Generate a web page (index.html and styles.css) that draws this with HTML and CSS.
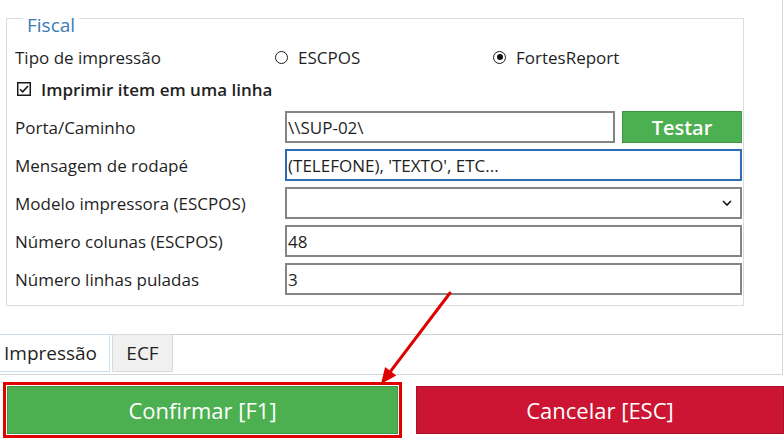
FILE: index.html
```html
<!DOCTYPE html>
<html lang="pt-BR">
<head>
  <meta charset="UTF-8" />
  <meta name="viewport" content="width=device-width, initial-scale=1.0"/>
  <title>Configuração de impressão</title>
  <link rel="stylesheet" href="styles.css">
</head>
<body>
  <div class="janela">
    <!-- Controle de abas (abas embaixo) -->
    <div class="abas">
      <div class="aba-conteudo">
        <fieldset class="grupo">
          <legend>Fiscal</legend>

          <div class="linha-tipo">
            <span class="rotulo">Tipo de impressão</span>
            <label class="opcao"><span class="radio"></span>ESCPOS</label>
            <label class="opcao"><span class="radio marcado"></span>FortesReport</label>
          </div>

          <label class="check">
            <svg class="check-caixa" width="14" height="14" viewBox="0 0 14 14">
              <rect x="0.75" y="0.75" width="12.5" height="12.5" fill="#fff" stroke="#1a1a1a" stroke-width="1.5"/>
              <path d="M3 7.2 L5.7 9.9 L11 4" fill="none" stroke="#1a1a1a" stroke-width="1.6"/>
            </svg>
            Imprimir item em uma linha
          </label>

          <div class="campos">
            <div class="campo">
              <span class="rotulo">Porta/Caminho</span>
              <div class="com-botao">
                <input class="entrada" type="text" value="\\SUP-02\">
                <button class="btn-testar">Testar</button>
              </div>
            </div>
            <div class="campo">
              <span class="rotulo">Mensagem de rodapé</span>
              <input class="entrada foco" type="text" value="(TELEFONE), 'TEXTO', ETC...">
            </div>
            <div class="campo">
              <span class="rotulo">Modelo impressora (ESCPOS)</span>
              <div class="entrada combo">
                <span></span>
                <svg width="10" height="6" viewBox="0 0 10 6">
                  <path d="M1 1 L5 5 L9 1" fill="none" stroke="#111" stroke-width="1.6"/>
                </svg>
              </div>
            </div>
            <div class="campo">
              <span class="rotulo">Número colunas (ESCPOS)</span>
              <input class="entrada" type="text" value="48">
            </div>
            <div class="campo">
              <span class="rotulo">Número linhas puladas</span>
              <input class="entrada" type="text" value="3">
            </div>
          </div>
        </fieldset>
      </div>

      <div class="abas-barra">
        <div class="aba ativa">Impressão</div>
        <div class="aba">ECF</div>
      </div>
    </div>

    <div class="acoes">
      <button class="btn btn-confirmar destaque">Confirmar [F1]</button>
      <button class="btn btn-cancelar">Cancelar [ESC]</button>
    </div>

    <!-- Seta de anotação apontando para o botão Confirmar -->
    <svg class="seta" width="784" height="438" viewBox="0 0 784 438">
      <line x1="450" y1="293" x2="390.7" y2="371.2" stroke="#e00000" stroke-width="3" stroke-linecap="round"/>
      <polygon points="381,384 396.3,375.4 385.1,367" fill="#e00000"/>
    </svg>
  </div>
</body>
</html>
```

FILE: styles.css
```css
/* Cores do formulário */
:root {
  --texto: #1f1f1f;
  --borda-campo: #858585;
  --borda-clara: #d6d6d6;
  --azul: #2d6db5;
  --verde: #4caf50;
  --verde-borda: #3e9742;
  --vermelho: #cc1533;
  --vermelho-borda: #a90f29;
  --fonte: 'Open Sans', 'Noto Sans', sans-serif;
}

* {
  box-sizing: border-box;
}

body {
  margin: 0;
  background: #fff;
  font-family: var(--fonte);
  color: var(--texto);
}

.janela {
  position: relative;
  width: 784px;
  height: 438px;
  overflow: hidden;
}

/* Controle de abas */
.abas {
  width: 783px;
  border-right: 1px solid var(--borda-clara);
  border-bottom: 1px solid var(--borda-clara);
}

.aba-conteudo {
  height: 335px;
  border-bottom: 1px solid #cfcfcf;
  padding-top: 8px;
}

.grupo {
  margin: 0 0 0 6px;
  width: 738px;
  padding: 16px 1px 10px 8px;
  border: 1px solid #dcdcdc;
  min-width: 0;
}

.grupo legend {
  position: relative;
  top: 7px;
  margin-left: 8px;
  padding: 0 4px;
  font-size: 19px;
  line-height: 20px;
  color: #3b7bb6;
}

.rotulo {
  font-size: 17px;
}

.linha-tipo {
  display: grid;
  grid-template-columns: 260px 218px 1fr;
  align-items: center;
  height: 26px;
}

.opcao {
  display: flex;
  align-items: center;
  gap: 10px;
  font-size: 17px;
}

.radio {
  flex: none;
  width: 13px;
  height: 13px;
  border: 1.5px solid #1a1a1a;
  border-radius: 50%;
  display: flex;
  align-items: center;
  justify-content: center;
}

.radio.marcado::after {
  content: "";
  width: 6px;
  height: 6px;
  border-radius: 50%;
  background: #111;
}

.check {
  display: flex;
  align-items: center;
  gap: 10px;
  height: 26px;
  margin-top: 6px;
  padding-left: 2px;
  font-size: 17px;
  font-weight: 600;
}

.check-caixa {
  flex: none;
}

.campos {
  display: flex;
  flex-direction: column;
  gap: 6px;
  margin-top: 9px;
}

.campo {
  display: grid;
  grid-template-columns: 270px 1fr;
  align-items: center;
  height: 32px;
}

.entrada {
  width: 100%;
  height: 32px;
  border: 2px solid var(--borda-campo);
  background: #fff;
  padding: 0 1px;
  font-family: var(--fonte);
  font-size: 17px;
  color: var(--texto);
  outline: none;
}

.entrada.foco {
  border-color: var(--azul);
}

.combo {
  display: flex;
  align-items: center;
  justify-content: space-between;
  padding-right: 8px;
}

.com-botao {
  display: flex;
  gap: 7px;
}

.com-botao .entrada {
  width: 330px;
}

.btn-testar {
  width: 120px;
  height: 32px;
  background: var(--verde);
  border: 1px solid var(--verde-borda);
  color: #fff;
  font-family: var(--fonte);
  font-size: 20px;
  font-weight: 600;
  padding: 0;
}

/* Abas na parte de baixo */
.abas-barra {
  display: flex;
  gap: 2px;
  height: 39px;
}

.aba {
  height: 38px;
  margin-top: -1px;
  display: flex;
  align-items: center;
  justify-content: center;
  font-size: 19px;
  background: #f0f0f0;
  border: 1px solid #d9d9d9;
  width: 61px;
}

.aba.ativa {
  width: 110px;
  justify-content: flex-start;
  background: #fff;
  border: 1px solid #c9dff2;
  border-left: none;
  padding-left: 4px;
}

/* Botões de ação */
.acoes {
  display: flex;
  gap: 18px;
  padding: 11px 0 0 7px;
}

.btn {
  height: 48px;
  color: #fff;
  font-family: var(--fonte);
  font-size: 22px;
  padding: 0;
}

.btn-confirmar {
  width: 391px;
  background: var(--verde);
  border: 1px solid var(--verde-borda);
}

.btn-cancelar {
  width: 368px;
  background: var(--vermelho);
  border: 1px solid var(--vermelho-borda);
}

.destaque {
  outline: 3px solid #e00000;
  outline-offset: 1px;
}

.seta {
  position: absolute;
  left: 0;
  top: 0;
  pointer-events: none;
}
```
